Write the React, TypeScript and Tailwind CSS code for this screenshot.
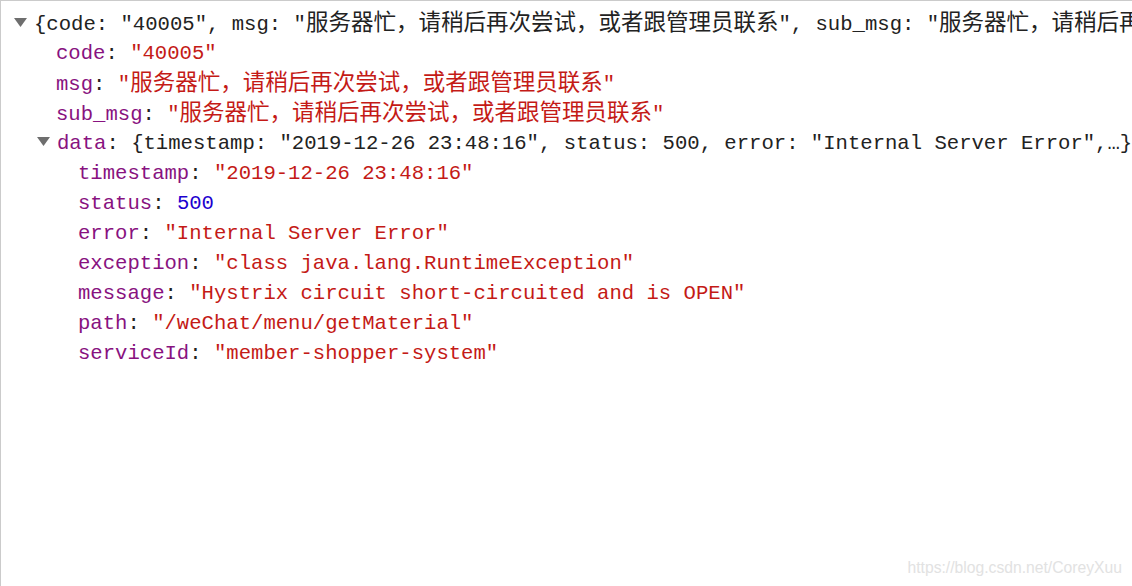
import React from "react";

const mono = "font-['Liberation_Mono',monospace] text-[20.6px]";

function Zh({ children }: { children: React.ReactNode }) {
  return (
    <span className="font-['Noto_Sans_CJK_SC',sans-serif] text-[22.5px] leading-none">
      {children}
    </span>
  );
}

function Key({ children }: { children: React.ReactNode }) {
  return <span className="text-[#881280]">{children}</span>;
}

function Str({ children }: { children: React.ReactNode }) {
  return <span className="text-[#c41a16]">{children}</span>;
}

function Caret() {
  return (
    <svg width="13" height="9" viewBox="0 0 13 9" className="inline-block align-middle mr-[7px] mb-[4px]">
      <polygon points="0,0 13,0 6.5,9" fill="#6e6e6e" />
    </svg>
  );
}

const MSG = "服务器忙，请稍后再次尝试，或者跟管理员联系";

export default function App() {
  const rows: [string, React.ReactNode][] = [
    ["timestamp", <Str>"2019-12-26 23:48:16"</Str>],
    ["status", <span className="text-[#1c00cf]">500</span>],
    ["error", <Str>"Internal Server Error"</Str>],
    ["exception", <Str>"class java.lang.RuntimeException"</Str>],
    ["message", <Str>"Hystrix circuit short-circuited and is OPEN"</Str>],
    ["path", <Str>"/weChat/menu/getMaterial"</Str>],
    ["serviceId", <Str>"member-shopper-system"</Str>],
  ];

  return (
    <div className="relative w-[1132px] h-[586px] overflow-hidden bg-white border-t border-l border-[#cbcbcb]">
      <div className="absolute top-[-1px] left-[163px] w-[114px] h-px bg-[#1a73e8]" />

      <div className={`${mono} pt-[8px] text-[#222] leading-[30px] whitespace-pre`}>
        <div className="h-[30px] pl-[13px]">
          <Caret />
          {'{code: "40005", msg: "'}
          <Zh>{MSG}</Zh>
          {'", sub_msg: "'}
          <Zh>{MSG}</Zh>
          {'"}'}
        </div>

        <div className="h-[30px] pl-[55px]">
          <Key>code</Key>: <Str>"40005"</Str>
        </div>
        <div className="h-[30px] pl-[55px]">
          <Key>msg</Key>:{" "}
          <Str>
            "<Zh>{MSG}</Zh>"
          </Str>
        </div>
        <div className="h-[30px] pl-[55px]">
          <Key>sub_msg</Key>:{" "}
          <Str>
            "<Zh>{MSG}</Zh>"
          </Str>
        </div>

        <div className="h-[30px] pl-[36px]">
          <Caret />
          <Key>data</Key>
          {': {timestamp: "2019-12-26 23:48:16", status: 500, error: "Internal Server Error",…}'}
        </div>

        {rows.map(([k, v]) => (
          <div key={k} className="h-[30px] pl-[77px]">
            <Key>{k}</Key>: {v}
          </div>
        ))}
      </div>

      <div className="absolute right-[10px] bottom-[6px] font-['Liberation_Sans',sans-serif] text-[15.7px] text-[#e2e2e2]">
        https://blog.csdn.net/CoreyXuu
      </div>
    </div>
  );
}
